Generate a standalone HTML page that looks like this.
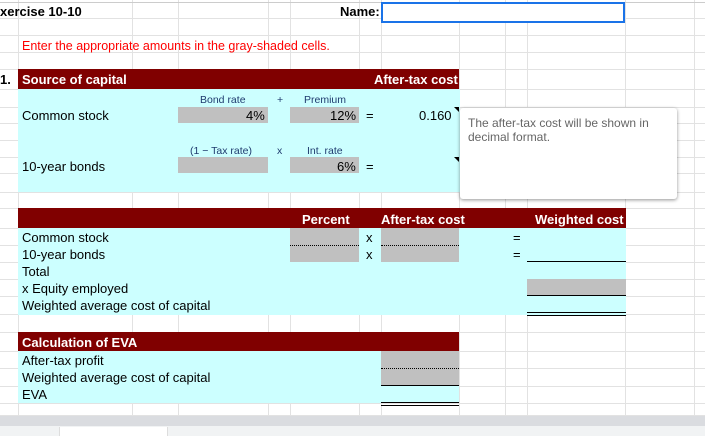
<!DOCTYPE html>
<html><head><meta charset="utf-8"><style>
*{margin:0;padding:0;box-sizing:border-box}
body{width:705px;height:436px;overflow:hidden;background:#fff;position:relative;font-family:"Liberation Sans",Arial,sans-serif;font-size:13px;color:#000}
.a{position:absolute}
.vl{position:absolute;top:0;height:415px;width:1px;background:#e2e2e2}
.hl{position:absolute;left:0;width:705px;height:1px;background:#e2e2e2}
.cy{background:#ccffff}
.dk{background:#800000;color:#fff;font-weight:bold;font-size:13px}
.g{background:#c0c0c0}
.t{position:absolute;white-space:nowrap;line-height:16px;margin-top:1px}
.s{font-size:10.5px;color:#1f3b6f}
</style></head><body>
<div class="vl" style="left:18px"></div><div class="vl" style="left:132px"></div><div class="vl" style="left:178px"></div><div class="vl" style="left:268px"></div><div class="vl" style="left:290px"></div><div class="vl" style="left:359px"></div><div class="vl" style="left:381px"></div><div class="vl" style="left:459px"></div><div class="vl" style="left:505px"></div><div class="vl" style="left:527px"></div><div class="vl" style="left:625px"></div><div class="vl" style="left:694px"></div>
<div class="hl" style="top:2px;background:#ccc"></div><div class="hl" style="top:18px"></div><div class="hl" style="top:35px"></div><div class="hl" style="top:52px"></div><div class="hl" style="top:69px"></div><div class="hl" style="top:89px"></div><div class="hl" style="top:107px"></div><div class="hl" style="top:123px"></div><div class="hl" style="top:140px"></div><div class="hl" style="top:157px"></div><div class="hl" style="top:173px"></div><div class="hl" style="top:192px"></div><div class="hl" style="top:208px"></div><div class="hl" style="top:228px"></div><div class="hl" style="top:245px"></div><div class="hl" style="top:262px"></div><div class="hl" style="top:279px"></div><div class="hl" style="top:296px"></div><div class="hl" style="top:314px"></div><div class="hl" style="top:332px"></div><div class="hl" style="top:351px"></div><div class="hl" style="top:368px"></div><div class="hl" style="top:386px"></div><div class="hl" style="top:403px"></div><div class="hl" style="top:415px"></div>

<div class="t" style="left:0;top:3px;font-weight:bold;font-size:13px">xercise 10-10</div>
<div class="t" style="left:340px;top:3px;font-weight:bold">Name:</div>
<div class="a" style="left:381px;top:2px;width:244px;height:21px;border:2px solid #1a73e8;background:#fff"></div>
<div class="t" style="left:22px;top:37px;color:#ff0000;font-size:12.5px">Enter the appropriate amounts in the gray-shaded cells.</div>

<div class="t" style="left:0;top:71px;font-weight:bold">1.</div>
<div class="a dk" style="left:18px;top:69px;width:441px;height:20px"></div>
<div class="t" style="left:22px;top:71px;color:#fff;font-weight:bold">Source of capital</div>
<div class="t" style="left:374px;top:71px;color:#fff;font-weight:bold">After-tax cost</div>
<div class="a cy" style="left:18px;top:89px;width:442px;height:103px"></div>
<div class="t s" style="left:200px;top:91px">Bond rate</div>
<div class="t s" style="left:277px;top:91px">+</div>
<div class="t s" style="left:304px;top:91px">Premium</div>
<div class="a g" style="left:178px;top:107px;width:90px;height:16px"></div>
<div class="a g" style="left:290px;top:107px;width:69px;height:16px"></div>
<div class="t" style="left:22px;top:107px">Common stock</div>
<div class="t" style="left:246px;top:107px">4%</div>
<div class="t" style="left:330px;top:107px">12%</div>
<div class="t" style="left:366px;top:107px">=</div>
<div class="t" style="left:419px;top:107px">0.160</div>
<div class="a" style="left:454px;top:107px;width:0;height:0;border-top:5px solid #000;border-left:5px solid transparent"></div>
<div class="t s" style="left:190px;top:142px">(1 − Tax rate)</div>
<div class="t s" style="left:277px;top:142px">x</div>
<div class="t s" style="left:307px;top:142px">Int. rate</div>
<div class="a g" style="left:178px;top:157px;width:90px;height:16px"></div>
<div class="a g" style="left:290px;top:157px;width:69px;height:16px"></div>
<div class="t" style="left:22px;top:158px">10-year bonds</div>
<div class="t" style="left:337px;top:158px">6%</div>
<div class="t" style="left:366px;top:158px">=</div>
<div class="a" style="left:454px;top:157px;width:0;height:0;border-top:5px solid #000;border-left:5px solid transparent"></div>

<div class="a" style="left:460px;top:108px;width:217px;height:91px;background:#fff;border-radius:3px;box-shadow:0 1px 3px rgba(0,0,0,.3),0 1px 4px rgba(0,0,0,.15)"></div>
<div class="t" style="left:468px;top:115px;font-size:12px;color:#666;line-height:14px;white-space:normal;width:205px">The after-tax cost will be shown in decimal format.</div>

<div class="a dk" style="left:18px;top:208px;width:608px;height:20px"></div>
<div class="t" style="left:302px;top:211px;color:#fff;font-weight:bold">Percent</div>
<div class="t" style="left:381px;top:211px;color:#fff;font-weight:bold">After-tax cost</div>
<div class="t" style="left:535px;top:211px;color:#fff;font-weight:bold">Weighted cost</div>
<div class="a cy" style="left:18px;top:228px;width:608px;height:87px"></div>
<div class="a g" style="left:290px;top:228px;width:69px;height:34px"></div>
<div class="a g" style="left:381px;top:228px;width:78px;height:34px"></div>
<div class="a" style="left:290px;top:245px;width:69px;border-top:1px dotted #000"></div>
<div class="a" style="left:381px;top:245px;width:78px;border-top:1px dotted #000"></div>
<div class="t" style="left:22px;top:229px">Common stock</div>
<div class="t" style="left:22px;top:246px">10-year bonds</div>
<div class="t" style="left:22px;top:263px">Total</div>
<div class="t" style="left:22px;top:280px">x Equity employed</div>
<div class="t" style="left:22px;top:297px">Weighted average cost of capital</div>
<div class="t" style="left:366px;top:229px">x</div>
<div class="t" style="left:366px;top:246px">x</div>
<div class="t" style="left:513px;top:229px">=</div>
<div class="t" style="left:513px;top:246px">=</div>
<div class="a" style="left:527px;top:261px;width:99px;height:1px;background:#000"></div>
<div class="a g" style="left:527px;top:279px;width:99px;height:17px;border-bottom:1px solid #000"></div>
<div class="a" style="left:527px;top:312px;width:99px;height:4px;border-top:1px solid #000;border-bottom:1px solid #000"></div>

<div class="a dk" style="left:18px;top:332px;width:441px;height:19px"></div>
<div class="t" style="left:22px;top:334px;color:#fff;font-weight:bold">Calculation of EVA</div>
<div class="a cy" style="left:18px;top:351px;width:441px;height:52px"></div>
<div class="a g" style="left:381px;top:351px;width:78px;height:35px;border-bottom:1px solid #000"></div>
<div class="a" style="left:381px;top:368px;width:78px;border-top:1px dotted #000"></div>
<div class="a" style="left:381px;top:402px;width:78px;height:4px;border-top:1px solid #000;border-bottom:1px solid #000"></div>
<div class="t" style="left:22px;top:352px">After-tax profit</div>
<div class="t" style="left:22px;top:369px">Weighted average cost of capital</div>
<div class="t" style="left:22px;top:386px">EVA</div>

<div class="a" style="left:0;top:416px;width:705px;height:10px;background:#dadce0"></div>
<div class="a" style="left:0;top:426px;width:705px;height:10px;background:#f1f3f4"></div>
<div class="a" style="left:59px;top:427px;width:109px;height:9px;background:#fff;border-left:1px solid #ddd;border-right:1px solid #ddd"></div>
</body></html>
